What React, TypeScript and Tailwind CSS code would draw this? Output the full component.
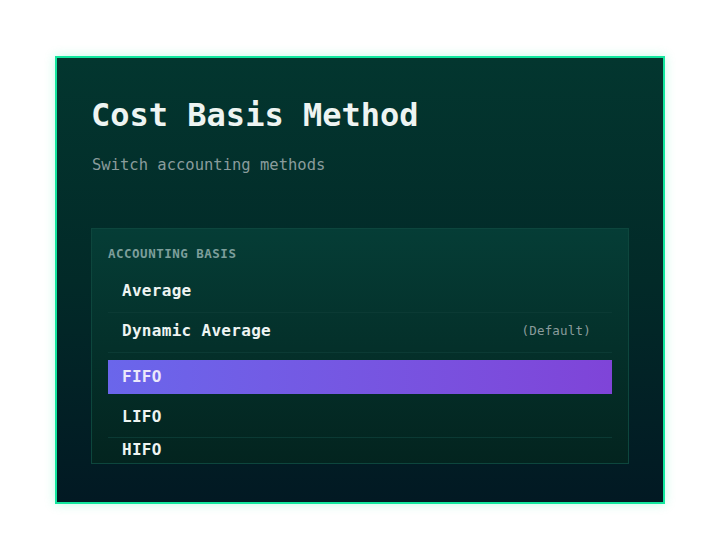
import React from "react";

const mono = { fontFamily: '"DejaVu Sans Mono", "Liberation Mono", monospace' };

export default function App() {
  return (
    <div
      className="w-full h-screen bg-white flex items-center justify-center"
      style={mono}
    >
      <div className="w-[610px] h-[448px] border-2 border-[#12e69e] shadow-[0_0_10px_rgba(18,230,158,0.25)] bg-gradient-to-b from-[#03362f] via-[#022a28] to-[#021923] px-[34px] pt-[37px]">
        <h1 className="text-[32px] leading-[40px] font-bold text-[#eef4f2]">
          Cost Basis Method
        </h1>
        <p className="mt-[18px] pl-px text-[15.5px] leading-6 text-[#8a9c9c]">
          Switch accounting methods
        </p>

        <div className="mt-[51px] h-[236px] overflow-hidden border border-[#0d463d] bg-gradient-to-b from-[#053d36] to-[#03241f] px-4 pt-[15px]">
          <div className="text-[12.5px] leading-5 tracking-[0.5px] font-bold text-[#7d9e9b] mb-[9px]">
            ACCOUNTING BASIS
          </div>

          <div className="border-b border-[#0b3a34] pl-[14px] pt-[6px] pb-[9px] text-base leading-6 tracking-[0.3px] font-bold text-[#eef4f2]">
            Average
          </div>
          <div className="flex items-start justify-between border-b border-[#0b3a34] pl-[14px] pr-[21px] pt-[6px] pb-[9px] text-base leading-6 tracking-[0.3px] font-bold text-[#eef4f2]">
            <span>Dynamic Average</span>
            <span className="text-[12.5px] tracking-[0.2px] font-normal text-[#8a9c9c]">
              (Default)
            </span>
          </div>
          <div className="mt-[7px] bg-gradient-to-r from-[#6a66eb] to-[#7f44d8] pl-[14px] py-[5px] text-base leading-6 tracking-[0.3px] font-bold text-[#ebe8fb]">
            FIFO
          </div>
          <div className="border-b border-[#0b3a34] pl-[14px] pt-[11px] pb-[8px] text-base leading-6 tracking-[0.3px] font-bold text-[#eef4f2]">
            LIFO
          </div>
          <div className="pl-[14px] pb-[10px] text-base leading-6 tracking-[0.3px] font-bold text-[#eef4f2]">
            HIFO
          </div>
        </div>
      </div>
    </div>
  );
}
